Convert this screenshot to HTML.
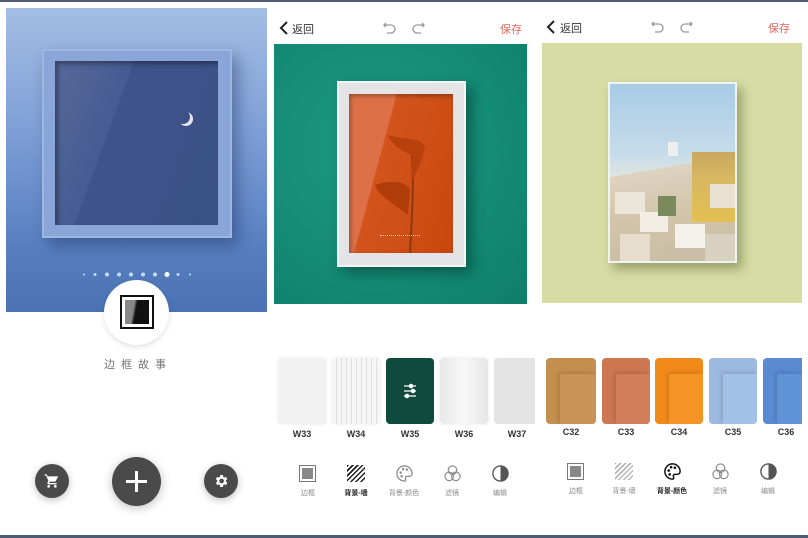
<!DOCTYPE html>
<html><head><meta charset="utf-8"><style>
*{margin:0;padding:0;box-sizing:border-box}
body{width:808px;height:538px;overflow:hidden;background:#fff;position:relative;font-family:"Liberation Sans","Noto Sans CJK SC",sans-serif}
.a{position:absolute}
.lbl{position:absolute;font-size:9px;font-weight:bold;color:#333;text-align:center;width:50px}
.tl{position:absolute;font-size:7px;color:#888;text-align:center;width:40px}
.sw{position:absolute;top:358px;height:66px;border-radius:4px;overflow:hidden}
.sw i{position:absolute;left:14px;top:16px;right:0;bottom:0;box-shadow:-2px -2px 4px rgba(0,0,0,.12)}
.b{position:absolute}
</style></head><body>
<div class="a" style="left:0;top:0;width:808px;height:2px;background:#4c5c74"></div>
<div class="a" style="left:0;top:535px;width:808px;height:3px;background:#4c5c74"></div>

<!-- LEFT PANEL -->
<div class="a" style="left:6px;top:8px;width:261px;height:304px;background:linear-gradient(180deg,#a4bde4 0%,#7f9fd6 40%,#5a82c2 75%,#4a72b4 100%)"></div>
<div class="a" style="left:42px;top:49px;width:190px;height:189px;background:#8aa6d8;border:2px solid #9db6e2;box-shadow:6px 8px 14px rgba(30,50,100,.45)"></div>
<div class="a" style="left:55px;top:61px;width:163px;height:164px;background:linear-gradient(110deg,#55689a 0%,#465c92 35%,#3e5389 36%,#3a5186 100%);box-shadow:inset 3px 3px 5px rgba(0,0,0,.35)"></div>
<div class="a" style="left:176px;top:110px;width:14px;height:14px;border-radius:50%;box-shadow:3px 2px 0 0 #e8e4f0"></div>
<div class="a" style="left:83px;top:264px;width:110px;height:5px">
<svg width="110" height="5"><g fill="#c8d8f4"><circle cx="1" cy="2.5" r="1"/><circle cx="12" cy="2.5" r="1.5"/><circle cx="24" cy="2.5" r="2"/><circle cx="36" cy="2.5" r="2"/><circle cx="48" cy="2.5" r="2"/><circle cx="60" cy="2.5" r="2"/><circle cx="72" cy="2.5" r="2"/><circle cx="84" cy="2.5" r="2.5" fill="#fff"/><circle cx="95" cy="2.5" r="1.5"/><circle cx="107" cy="2.5" r="1"/></g></svg></div>
<div class="a" style="left:104px;top:280px;width:65px;height:65px;border-radius:50%;background:#fff;box-shadow:0 2px 6px rgba(0,0,0,.12)"></div>
<div class="a" style="left:120px;top:295px;width:34px;height:34px;border:2px solid #111;padding:3px"><div style="width:100%;height:100%;background:linear-gradient(100deg,#888 0 35%,#111 45%)"></div></div>
<div class="a" style="left:96px;top:356px;width:84px;font-size:11px;color:#777;letter-spacing:6px;text-align:center">边框故事</div>
<div class="a" style="left:35px;top:464px;width:34px;height:34px;border-radius:50%;background:#4a4a4a;box-shadow:0 2px 8px rgba(0,0,0,.25)"></div>
<svg class="a" style="left:44px;top:473px" width="16" height="16" viewBox="0 0 24 24"><path fill="#fff" d="M7 18a2 2 0 1 0 0 4 2 2 0 0 0 0-4zM1 2v2h2l3.6 7.6-1.35 2.4C4.7 15.4 5.6 17 7 17h12v-2H7.4l1.1-2h7.45c.75 0 1.4-.4 1.75-1L21.3 5H5.2L4.3 2H1zm16 16a2 2 0 1 0 0 4 2 2 0 0 0 0-4z"/></svg>
<div class="a" style="left:112px;top:457px;width:49px;height:49px;border-radius:50%;background:#4a4a4a;box-shadow:0 2px 10px rgba(0,0,0,.25)"></div>
<div class="a" style="left:126px;top:480px;width:21px;height:3px;background:#fff"></div>
<div class="a" style="left:135px;top:471px;width:3px;height:21px;background:#fff"></div>
<div class="a" style="left:204px;top:464px;width:34px;height:34px;border-radius:50%;background:#4a4a4a;box-shadow:0 2px 8px rgba(0,0,0,.25)"></div>
<svg class="a" style="left:213px;top:473px" width="16" height="16" viewBox="0 0 24 24"><path fill="#fff" d="M19.4 13a7.5 7.5 0 0 0 0-2l2.1-1.6-2-3.5-2.5 1a7.3 7.3 0 0 0-1.7-1L14.9 3h-4l-.4 2.9a7.3 7.3 0 0 0-1.7 1l-2.5-1-2 3.5L6.4 11a7.5 7.5 0 0 0 0 2l-2.1 1.6 2 3.5 2.5-1c.5.4 1.1.7 1.7 1l.4 2.9h4l.4-2.9c.6-.3 1.2-.6 1.7-1l2.5 1 2-3.5zM12.9 15.5a3.5 3.5 0 1 1 0-7 3.5 3.5 0 0 1 0 7z"/></svg>

<!-- MIDDLE PANEL -->
<svg class="a" style="left:279px;top:21px" width="10" height="14" viewBox="0 0 10 14"><path d="M8 1L2 7l6 6" stroke="#222" stroke-width="2" fill="none"/></svg>
<div class="a" style="left:292px;top:21px;font-size:11px;color:#333">返回</div>
<svg class="a" style="left:383px;top:21px" width="14" height="14" viewBox="0 0 14 14"><path d="M3 2L1 4l2 2M1 4h7a4 4 0 0 1 0 8H4" stroke="#999" stroke-width="1.3" fill="none"/></svg>
<svg class="a" style="left:411px;top:21px" width="14" height="14" viewBox="0 0 14 14"><path d="M11 2l2 2-2 2M13 4H6a4 4 0 0 0 0 8h4" stroke="#999" stroke-width="1.3" fill="none"/></svg>
<div class="a" style="left:500px;top:21px;font-size:11px;color:#e06a60">保存</div>

<div class="a" style="left:274px;top:44px;width:253px;height:260px;background:radial-gradient(ellipse at 40% 40%,#1f9a84 0%,#138a75 60%,#0f7e6b 100%)"></div>
<div class="a" style="left:337px;top:81px;width:129px;height:186px;background:#e4e4e6;border:2px solid #f4f6f6;box-shadow:6px 6px 12px rgba(0,40,30,.45)"></div>
<div class="a" style="left:349px;top:94px;width:104px;height:159px;background:linear-gradient(105deg,#de7048 0 32%,#d2541c 33%,#c9470f 100%);box-shadow:inset 2px 2px 4px rgba(0,0,0,.3)"></div>
<svg class="a" style="left:370px;top:135px" width="60" height="118" viewBox="0 0 60 118"><path d="M40 118 C42 80 44 50 42 20" stroke="#8a3a10" stroke-width="2" fill="none"/><path d="M42 20 C30 15 20 8 18 0 C35 5 52 2 55 12 C52 25 48 35 42 45 Z" fill="#b8400c"/><path d="M38 80 C25 70 8 60 5 50 C20 45 35 45 40 55 Z" fill="#b03c0a"/></svg>
<div class="a" style="left:380px;top:235px;width:40px;height:2px;border-top:1px dotted #f0d0c0"></div>

<div class="sw" style="left:278px;width:48px;background:#f2f2f2;box-shadow:0 0 3px rgba(0,0,0,.1)"></div>
<div class="sw" style="left:332px;width:48px;background:repeating-linear-gradient(90deg,#f6f6f6 0 4px,#dedede 4px 5px);box-shadow:0 0 3px rgba(0,0,0,.1)"></div>
<div class="sw" style="left:386px;width:48px;background:#0f4a3c"></div>
<svg class="a" style="left:402px;top:383px" width="16" height="16" viewBox="0 0 16 16" stroke="#fff" stroke-width="1.3" fill="#fff"><path d="M2 3h12M2 8h12M2 13h12"/><circle cx="9" cy="3" r="1.6"/><circle cx="11" cy="8" r="1.6"/><circle cx="5" cy="13" r="1.6"/></svg>
<div class="sw" style="left:440px;width:48px;background:linear-gradient(90deg,#e8e8e8,#f8f8f8,#e6e6e6);box-shadow:0 0 3px rgba(0,0,0,.1)"></div>
<div class="sw" style="left:494px;width:41px;background:#e4e4e4;border-radius:4px 0 0 4px"></div>
<div class="lbl" style="left:277px;top:429px">W33</div>
<div class="lbl" style="left:331px;top:429px">W34</div>
<div class="lbl" style="left:385px;top:429px">W35</div>
<div class="lbl" style="left:439px;top:429px">W36</div>
<div class="lbl" style="left:492px;top:429px">W37</div>

<div class="a" style="left:299px;top:465px;width:17px;height:17px;border:1.5px solid #777;padding:2px"><div style="width:100%;height:100%;background:#888"></div></div>
<div class="a" style="left:347px;top:465px;width:18px;height:17px;background:repeating-linear-gradient(135deg,#222 0 1.5px,transparent 1.5px 3.5px)"></div>
<svg class="a" style="left:395px;top:464px" width="19" height="19" viewBox="0 0 20 20"><path d="M10 2a8 8 0 1 0 0 16c1.5 0 1.5-1.5 1-2.5-.6-1 0-2.5 1.5-2.5H15a3 3 0 0 0 3-3c0-4.4-3.6-8-8-8z" stroke="#888" stroke-width="1.3" fill="none"/><circle cx="6" cy="9" r="1.3" fill="#888"/><circle cx="8.5" cy="5.5" r="1.3" fill="#888"/><circle cx="12.5" cy="6" r="1.3" fill="#888"/><circle cx="7" cy="13" r="1.3" fill="#888"/></svg>
<svg class="a" style="left:443px;top:464px" width="19" height="19" viewBox="0 0 20 20" stroke="#888" stroke-width="1.2" fill="none"><circle cx="10" cy="6.5" r="4.5"/><circle cx="6.5" cy="13" r="4.5"/><circle cx="13.5" cy="13" r="4.5"/></svg>
<svg class="a" style="left:491px;top:464px" width="19" height="19" viewBox="0 0 20 20"><circle cx="10" cy="10" r="8" stroke="#555" stroke-width="1.4" fill="none"/><path d="M10 2a8 8 0 0 1 0 16z" fill="#555"/></svg>
<div class="tl" style="left:288px;top:488px">边框</div>
<div class="tl" style="left:336px;top:488px;color:#222;font-weight:bold">背景-墙</div>
<div class="tl" style="left:384px;top:488px">背景-颜色</div>
<div class="tl" style="left:432px;top:488px">滤镜</div>
<div class="tl" style="left:480px;top:488px">编辑</div>

<!-- RIGHT PANEL -->
<svg class="a" style="left:546px;top:20px" width="10" height="14" viewBox="0 0 10 14"><path d="M8 1L2 7l6 6" stroke="#222" stroke-width="2" fill="none"/></svg>
<div class="a" style="left:560px;top:20px;font-size:11px;color:#333">返回</div>
<svg class="a" style="left:651px;top:20px" width="14" height="14" viewBox="0 0 14 14"><path d="M3 2L1 4l2 2M1 4h7a4 4 0 0 1 0 8H4" stroke="#999" stroke-width="1.3" fill="none"/></svg>
<svg class="a" style="left:679px;top:20px" width="14" height="14" viewBox="0 0 14 14"><path d="M11 2l2 2-2 2M13 4H6a4 4 0 0 0 0 8h4" stroke="#999" stroke-width="1.3" fill="none"/></svg>
<div class="a" style="left:768px;top:20px;font-size:11px;color:#e06a60">保存</div>

<div class="a" style="left:542px;top:43px;width:260px;height:260px;background:#d6dca4"></div>
<div class="a" style="left:608px;top:82px;width:129px;height:181px;background:#eef;border:2px solid #f0f4f0;box-shadow:5px 6px 10px rgba(60,70,20,.4);overflow:hidden">
<div class="b" style="left:0;top:0;width:125px;height:177px;background:linear-gradient(180deg,#a8cbe6 0%,#c6dcea 40%,#e0e4e0 52%,#e2d6c2 100%)"></div>
<div class="b" style="left:0;top:78px;width:125px;height:99px;background:linear-gradient(170deg,transparent 0 12%,#ddd3c0 13%,#d2c5ab 50%,#c8bca4 100%)"></div>
<div class="b" style="left:82px;top:68px;width:43px;height:70px;background:linear-gradient(180deg,#c8a860,#d8b860 40%,#e2c050)"></div>
<div class="b" style="left:58px;top:58px;width:10px;height:14px;background:#eee;"></div>
<div class="b" style="left:5px;top:108px;width:30px;height:22px;background:#ece6da"></div>
<div class="b" style="left:30px;top:128px;width:28px;height:20px;background:#f2eee6"></div>
<div class="b" style="left:10px;top:150px;width:30px;height:27px;background:#e6ddcc"></div>
<div class="b" style="left:65px;top:140px;width:30px;height:24px;background:#f4f0ea"></div>
<div class="b" style="left:48px;top:112px;width:18px;height:20px;background:#7a8a5c"></div>
<div class="b" style="left:95px;top:150px;width:30px;height:27px;background:#d8d0c0"></div>
<div class="b" style="left:100px;top:100px;width:25px;height:24px;background:#e8e0d0"></div>
</div>

<div class="sw" style="left:546px;width:50px;background:#c48e4e"><i style="background:#c99256"></i></div>
<div class="sw" style="left:602px;width:48px;background:#cd7752"><i style="background:#d37e5a"></i></div>
<div class="sw" style="left:655px;width:48px;background:#f28a1a"><i style="background:#f59425"></i></div>
<div class="sw" style="left:709px;width:48px;background:#9cb9e0"><i style="background:#a3c0e6"></i></div>
<div class="sw" style="left:763px;width:39px;background:#5a8ad2;border-radius:4px 0 0 4px"><i style="background:#6092d8"></i></div>
<div class="lbl" style="left:546px;top:427px">C32</div>
<div class="lbl" style="left:601px;top:427px">C33</div>
<div class="lbl" style="left:654px;top:427px">C34</div>
<div class="lbl" style="left:708px;top:427px">C35</div>
<div class="lbl" style="left:761px;top:427px">C36</div>

<div class="a" style="left:567px;top:463px;width:17px;height:17px;border:1.5px solid #777;padding:2px"><div style="width:100%;height:100%;background:#888"></div></div>
<div class="a" style="left:615px;top:463px;width:18px;height:17px;background:repeating-linear-gradient(135deg,#aaa 0 1.2px,transparent 1.2px 3.5px)"></div>
<svg class="a" style="left:663px;top:462px" width="19" height="19" viewBox="0 0 20 20"><path d="M10 2a8 8 0 1 0 0 16c1.5 0 1.5-1.5 1-2.5-.6-1 0-2.5 1.5-2.5H15a3 3 0 0 0 3-3c0-4.4-3.6-8-8-8z" stroke="#111" stroke-width="1.6" fill="none"/><circle cx="6" cy="9" r="1.4" fill="#111"/><circle cx="8.5" cy="5.5" r="1.4" fill="#111"/><circle cx="12.5" cy="6" r="1.4" fill="#111"/><circle cx="7" cy="13" r="1.4" fill="#111"/></svg>
<svg class="a" style="left:711px;top:462px" width="19" height="19" viewBox="0 0 20 20" stroke="#888" stroke-width="1.2" fill="none"><circle cx="10" cy="6.5" r="4.5"/><circle cx="6.5" cy="13" r="4.5"/><circle cx="13.5" cy="13" r="4.5"/></svg>
<svg class="a" style="left:759px;top:462px" width="19" height="19" viewBox="0 0 20 20"><circle cx="10" cy="10" r="8" stroke="#555" stroke-width="1.4" fill="none"/><path d="M10 2a8 8 0 0 1 0 16z" fill="#555"/></svg>
<div class="tl" style="left:556px;top:486px">边框</div>
<div class="tl" style="left:604px;top:486px">背景-墙</div>
<div class="tl" style="left:652px;top:486px;color:#222;font-weight:bold">背景-颜色</div>
<div class="tl" style="left:700px;top:486px">滤镜</div>
<div class="tl" style="left:748px;top:486px">编辑</div>
</body></html>
